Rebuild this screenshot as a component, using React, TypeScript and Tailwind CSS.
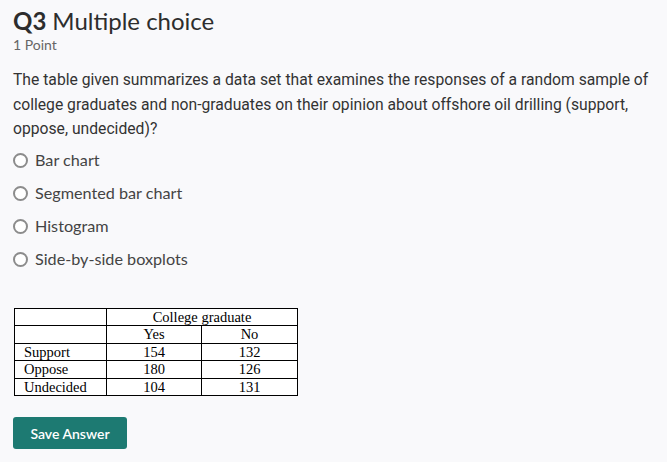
import React from "react";

const options = ["Bar chart", "Segmented bar chart", "Histogram", "Side-by-side boxplots"];
const rows: [string, string, string][] = [
  ["Support", "154", "132"],
  ["Oppose", "180", "126"],
  ["Undecided", "104", "131"],
];

export default function App() {
  return (
    <div className="w-[667px] h-[462px] bg-[#f9f9fb] pl-[13px] pt-[7px] overflow-hidden">
      <div className="flex items-baseline gap-[6px] font-['Lato','Open_Sans',sans-serif] text-[#2d2d2d] text-[24px] leading-[28px]">
        <span className="font-bold">Q3</span>
        <span>Multiple choice</span>
      </div>
      <div className="font-['Lato',sans-serif] text-[14px] leading-[18px] text-[#666] mt-[1px]">1 Point</div>
      <p className="mt-[14px] pr-[6px] font-['Roboto',sans-serif] text-[15.7px] leading-[24.5px] text-[#333]">
        The table given summarizes a data set that examines the responses of a random sample of college graduates and non-graduates on their opinion about offshore oil drilling (support, oppose, undecided)?
      </p>
      <div className="mt-[2px] flex flex-col">
        {options.map((o) => (
          <label key={o} className="flex items-center h-[33px] gap-[7px]">
            <span className="w-[15px] h-[15px] rounded-full border-2 border-[#8c8c8c] bg-white" />
            <span className="font-['Lato',sans-serif] text-[16.2px] text-[#444]">{o}</span>
          </label>
        ))}
      </div>
      <table className="mt-[32px] ml-[1px] bg-white border-collapse font-['Liberation_Serif',serif] text-[14.5px] leading-[16px] text-black">
        <tbody>
          <tr className="h-[17.5px]">
            <td className="border border-black w-[92px]"></td>
            <td colSpan={2} className="border border-black text-center">College graduate</td>
          </tr>
          <tr className="h-[17.5px]">
            <td className="border border-black"></td>
            <td className="border border-black w-[95px] text-center">Yes</td>
            <td className="border border-black w-[96px] text-center">No</td>
          </tr>
          {rows.map((r) => (
            <tr key={r[0]} className="h-[17.5px]">
              <td className="border border-black pl-[9px]">{r[0]}</td>
              <td className="border border-black text-center">{r[1]}</td>
              <td className="border border-black text-center">{r[2]}</td>
            </tr>
          ))}
        </tbody>
      </table>
      <button className="mt-[21px] w-[114px] h-[32px] rounded-[3px] bg-[#1d7a72] text-white font-['Lato',sans-serif] font-semibold text-[14px]">
        Save Answer
      </button>
    </div>
  );
}
